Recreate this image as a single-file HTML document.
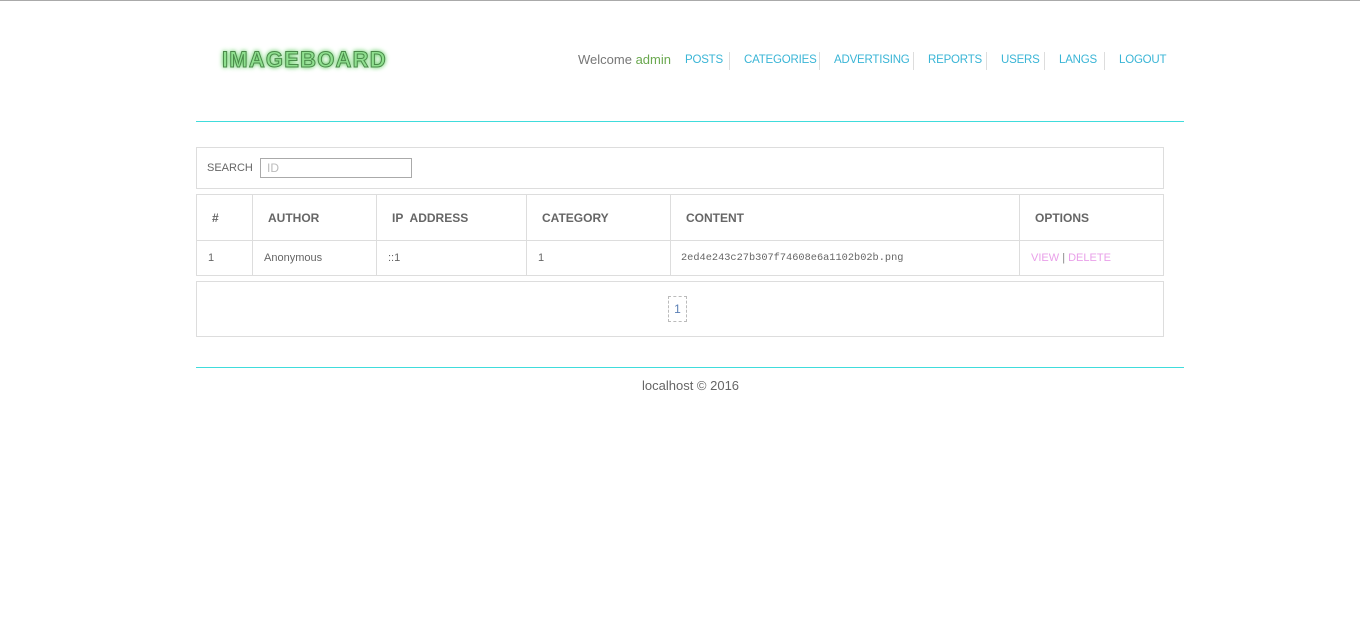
<!DOCTYPE html>
<html><head><meta charset="utf-8">
<style>
*{margin:0;padding:0;box-sizing:border-box}
body{width:1360px;height:644px;background:#fff;font-family:"Liberation Sans",sans-serif;position:relative;overflow:hidden}
.a{position:absolute}
.logo{left:222px;top:47px;font-size:22px;font-weight:bold;color:#8fe08f;letter-spacing:1.2px;-webkit-text-stroke:1px #4a8a4a;text-shadow:0 0 4px #5c5,0 0 6px #9d9}
.welcome{left:578px;top:52px;font-size:13px;color:#777}
.welcome b{font-weight:normal;color:#6aa84f}
.nav{top:54px;font-size:11.5px;letter-spacing:-0.2px;color:#3ab5d6}
.sep{top:52px;width:1px;height:18px;background:#ddd}
.box{border:1px solid #ddd}
table{border-collapse:collapse;position:absolute;left:196px;top:194px;width:968px}
th{border:1px solid #ddd;color:#666;font-size:12px;text-align:left;font-weight:bold;height:46px;padding-left:15px}
td{border:1px solid #ddd;color:#666;font-size:11px;height:35px;padding-left:11px}
</style></head><body>
<div class="a" style="left:0;top:0;width:1360px;height:1px;background:#aaa"></div>
<div class="a logo">IMAGEBOARD</div>
<div class="a welcome">Welcome <b>admin</b></div>
<div class="a nav" style="left:685px">POSTS</div>
<div class="a sep" style="left:729px"></div>
<div class="a nav" style="left:744px">CATEGORIES</div>
<div class="a sep" style="left:819px"></div>
<div class="a nav" style="left:834px">ADVERTISING</div>
<div class="a sep" style="left:913px"></div>
<div class="a nav" style="left:928px">REPORTS</div>
<div class="a sep" style="left:986px"></div>
<div class="a nav" style="left:1001px">USERS</div>
<div class="a sep" style="left:1044px"></div>
<div class="a nav" style="left:1059px">LANGS</div>
<div class="a sep" style="left:1104px"></div>
<div class="a nav" style="left:1119px">LOGOUT</div>
<div class="a" style="left:196px;top:121px;width:988px;height:1px;background:#40dcdc"></div>
<div class="a box" style="left:196px;top:147px;width:968px;height:42px"></div>
<div class="a" style="left:207px;top:162px;font-size:11px;color:#666">SEARCH</div>
<div class="a" style="left:260px;top:158px;width:152px;height:20px;border:1px solid #aaa;font-size:12px;color:#bbb;padding:2px 6px">ID</div>
<table>
<tr><th style="width:56px">#</th><th style="width:124px">AUTHOR</th><th style="width:150px">IP&nbsp; ADDRESS</th><th style="width:144px">CATEGORY</th><th style="width:349px">CONTENT</th><th>OPTIONS</th></tr>
<tr><td>1</td><td>Anonymous</td><td>::1</td><td>1</td><td style="font-family:'Liberation Mono',monospace;font-size:10.3px;padding-left:10px">2ed4e243c27b307f74608e6a1102b02b.png</td><td><span style="color:#e9a0e9">VIEW</span> <span style="color:#888">|</span> <span style="color:#e9a0e9">DELETE</span></td></tr>
</table>
<div class="a box" style="left:196px;top:281px;width:968px;height:56px"></div>
<div class="a" style="left:668px;top:296px;width:19px;height:26px;border:1px dashed #bbb;font-size:12px;color:#5a7fb5;text-align:center;line-height:24px">1</div>
<div class="a" style="left:196px;top:367px;width:988px;height:1px;background:#40dcdc"></div>
<div class="a" style="left:642px;top:378px;font-size:13px;color:#666">localhost © 2016</div>
</body></html>
